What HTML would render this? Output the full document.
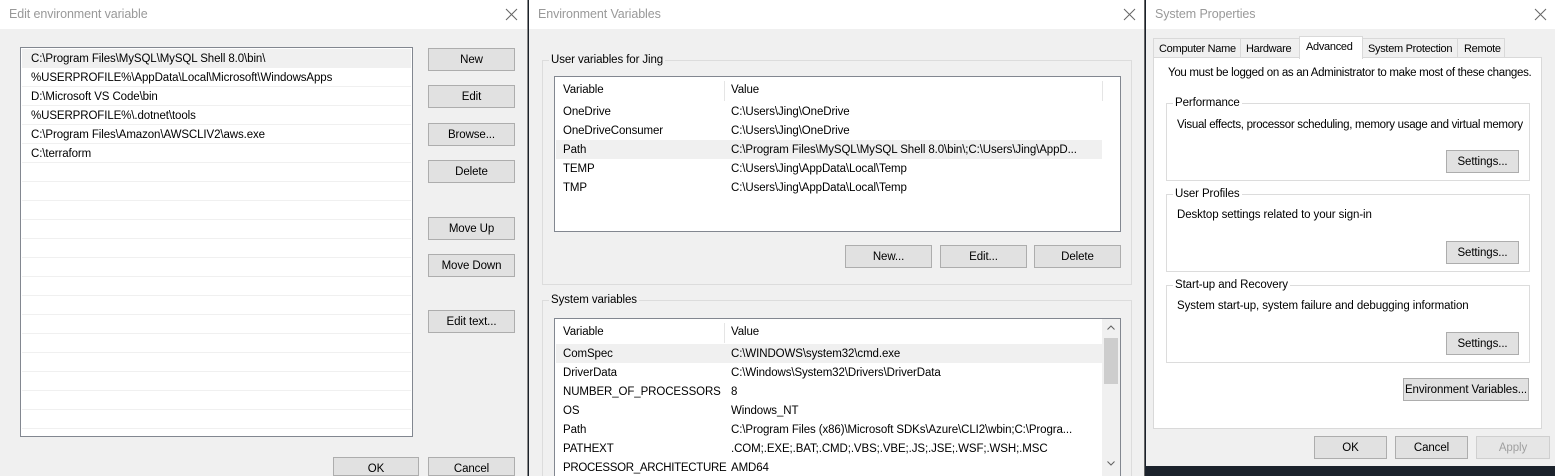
<!DOCTYPE html><html><head><style>
*{box-sizing:border-box;margin:0;padding:0;white-space:nowrap}
body{width:1555px;height:476px;overflow:hidden;position:relative;background:#1b222b;font-family:"Liberation Sans",sans-serif;font-size:11.5px;letter-spacing:-0.1px;color:#000}
.a{position:absolute}
.win{position:absolute;top:0;background:#f0f0f0;overflow:hidden}
.tb{position:absolute;left:0;top:0;right:0;height:29px;background:#fff;color:#999;font-size:12.5px;padding:7px 0 0 9px}
.x{position:absolute;top:8px;width:13px;height:13px}
.btn{position:absolute;height:23px;background:#e1e1e1;border:1px solid #adadad;text-align:center;line-height:22px}
.lst{position:absolute;background:#fff;border:1px solid #828790;overflow:hidden}
.row{position:absolute;left:1px;right:1px;height:19px;line-height:20px}
.sep{border-bottom:1px solid #f0f0f0}
.gb{position:absolute;border:1px solid #dcdcdc}
.gl{position:absolute;background:#f0f0f0;padding:0 2px;top:-7px;left:6px}
.gw{background:#fff}
.tab{font-size:11px;letter-spacing:-0.3px}
</style></head><body>
<!-- left -->
<div class="win" style="left:0;width:528px;height:476px;border-right:1px solid #888">
<div class="tb">Edit environment variable<svg class="x" style="left:505px" viewBox="0 0 13 13"><path d="M1 1L12 12M12 1L1 12" stroke="#666" stroke-width="1" fill="none"/></svg></div>
<div class="lst" style="left:20px;top:47px;width:393px;height:390px">
<div class="row" style="top:1px;background:#f0f0f0;padding-left:9px">C:\Program Files\MySQL\MySQL Shell 8.0\bin\</div>
<div class="row sep" style="top:20px;padding-left:9px">%USERPROFILE%\AppData\Local\Microsoft\WindowsApps</div>
<div class="row sep" style="top:39px;padding-left:9px">D:\Microsoft VS Code\bin</div>
<div class="row sep" style="top:58px;padding-left:9px">%USERPROFILE%\.dotnet\tools</div>
<div class="row sep" style="top:77px;padding-left:9px">C:\Program Files\Amazon\AWSCLIV2\aws.exe</div>
<div class="row sep" style="top:96px;padding-left:9px">C:\terraform</div>
<div class="row sep" style="top:115px"></div><div class="row sep" style="top:134px"></div><div class="row sep" style="top:153px"></div><div class="row sep" style="top:172px"></div><div class="row sep" style="top:191px"></div><div class="row sep" style="top:210px"></div><div class="row sep" style="top:229px"></div><div class="row sep" style="top:248px"></div><div class="row sep" style="top:267px"></div><div class="row sep" style="top:286px"></div><div class="row sep" style="top:305px"></div><div class="row sep" style="top:324px"></div><div class="row sep" style="top:343px"></div><div class="row sep" style="top:362px"></div>
</div>
<div class="btn" style="left:428px;top:48px;width:87px">New</div>
<div class="btn" style="left:428px;top:85px;width:87px">Edit</div>
<div class="btn" style="left:428px;top:123px;width:87px">Browse...</div>
<div class="btn" style="left:428px;top:160px;width:87px">Delete</div>
<div class="btn" style="left:428px;top:217px;width:87px">Move Up</div>
<div class="btn" style="left:428px;top:254px;width:87px">Move Down</div>
<div class="btn" style="left:428px;top:310px;width:87px">Edit text...</div>
<div class="btn" style="left:333px;top:457px;width:86px;height:19px">OK</div>
<div class="btn" style="left:428px;top:457px;width:87px;height:19px">Cancel</div>
</div>
<!-- middle -->
<div class="win" style="left:529px;width:616px;height:476px;border-right:1px solid #666">
<div class="tb">Environment Variables<svg class="x" style="left:594px" viewBox="0 0 13 13"><path d="M1 1L12 12M12 1L1 12" stroke="#666" stroke-width="1" fill="none"/></svg></div>
<div class="gb" style="left:13px;top:60px;width:590px;height:225px"><span class="gl">User variables for Jing</span></div>
<div class="lst" style="left:25px;top:76px;width:567px;height:156px">
<div class="row" style="top:1px;height:24px;line-height:25px;padding-left:7px">Variable<span class="a" style="left:168px;top:3px;height:20px;border-left:1px solid #e5e5e5"></span><span class="a" style="left:175px">Value</span><span class="a" style="left:546px;top:3px;height:20px;border-left:1px solid #e5e5e5"></span></div>
<div class="row" style="top:25px;padding-left:7px">OneDrive<span class="a" style="left:175px">C:\Users\Jing\OneDrive</span></div>
<div class="row" style="top:44px;padding-left:7px">OneDriveConsumer<span class="a" style="left:175px">C:\Users\Jing\OneDrive</span></div>
<div class="row" style="top:63px;padding-left:7px;background:#f0f0f0;right:18px">Path<span class="a" style="left:175px">C:\Program Files\MySQL\MySQL Shell 8.0\bin\;C:\Users\Jing\AppD...</span></div>
<div class="row" style="top:82px;padding-left:7px">TEMP<span class="a" style="left:175px">C:\Users\Jing\AppData\Local\Temp</span></div>
<div class="row" style="top:101px;padding-left:7px">TMP<span class="a" style="left:175px">C:\Users\Jing\AppData\Local\Temp</span></div>
</div>
<div class="btn" style="left:316px;top:245px;width:87px">New...</div>
<div class="btn" style="left:411px;top:245px;width:87px">Edit...</div>
<div class="btn" style="left:505px;top:245px;width:87px">Delete</div>
<div class="gb" style="left:13px;top:300px;width:590px;height:176px;border-bottom:none"><span class="gl">System variables</span></div>
<div class="lst" style="left:25px;top:318px;width:567px;height:158px;border-bottom:none">
<div class="row" style="top:1px;height:24px;line-height:25px;padding-left:7px">Variable<span class="a" style="left:168px;top:3px;height:20px;border-left:1px solid #e5e5e5"></span><span class="a" style="left:175px">Value</span></div>
<div class="row" style="top:25px;padding-left:7px;background:#f0f0f0;right:18px">ComSpec<span class="a" style="left:175px">C:\WINDOWS\system32\cmd.exe</span></div>
<div class="row" style="top:44px;padding-left:7px">DriverData<span class="a" style="left:175px">C:\Windows\System32\Drivers\DriverData</span></div>
<div class="row" style="top:63px;padding-left:7px">NUMBER_OF_PROCESSORS<span class="a" style="left:175px">8</span></div>
<div class="row" style="top:82px;padding-left:7px">OS<span class="a" style="left:175px">Windows_NT</span></div>
<div class="row" style="top:101px;padding-left:7px">Path<span class="a" style="left:175px">C:\Program Files (x86)\Microsoft SDKs\Azure\CLI2\wbin;C:\Progra...</span></div>
<div class="row" style="top:120px;padding-left:7px">PATHEXT<span class="a" style="left:175px">.COM;.EXE;.BAT;.CMD;.VBS;.VBE;.JS;.JSE;.WSF;.WSH;.MSC</span></div>
<div class="row" style="top:139px;padding-left:7px;letter-spacing:-0.3px">PROCESSOR_ARCHITECTURE<span class="a" style="left:175px;letter-spacing:-0.1px">AMD64</span></div>
<div class="a" style="left:547px;top:0;width:18px;height:158px;background:#f0f0f0"><div class="a" style="left:2px;top:19px;width:14px;height:46px;background:#cdcdcd"></div>
<svg class="a" style="left:5px;top:6px" width="8" height="5" viewBox="0 0 8 5"><path d="M0.5 4.5L4 1L7.5 4.5" stroke="#606060" fill="none"/></svg>
<svg class="a" style="left:5px;top:142px" width="8" height="5" viewBox="0 0 8 5"><path d="M0.5 0.5L4 4L7.5 0.5" stroke="#606060" fill="none"/></svg></div>
</div>
</div>
<!-- right -->
<div class="win" style="left:1146px;width:409px;height:466px">
<div class="tb">System Properties<svg class="x" style="left:388px" viewBox="0 0 13 13"><path d="M1 1L12 12M12 1L1 12" stroke="#666" stroke-width="1" fill="none"/></svg></div>
<div class="a" style="left:7px;top:57px;width:389px;height:372px;background:#fff;border:1px solid #d9d9d9"></div>
<div class="a tab" style="left:7px;top:38px;width:88px;height:20px;border:1px solid #d9d9d9;background:#f0f0f0;padding:4px 0 0 5px">Computer Name</div>
<div class="a tab" style="left:94px;top:38px;width:60px;height:20px;border:1px solid #d9d9d9;background:#f0f0f0;padding:4px 0 0 5px">Hardware</div>
<div class="a tab" style="left:153px;top:36px;width:64px;height:23px;border:1px solid #d9d9d9;border-bottom:none;background:#fff;padding:4px 0 0 6px">Advanced</div>
<div class="a tab" style="left:216px;top:38px;width:96px;height:20px;border:1px solid #d9d9d9;background:#f0f0f0;padding:4px 0 0 5px">System Protection</div>
<div class="a tab" style="left:311px;top:38px;width:48px;height:20px;border:1px solid #d9d9d9;background:#f0f0f0;padding:4px 0 0 6px">Remote</div>
<div class="a" style="left:22px;top:67px;letter-spacing:-0.3px">You must be logged on as an Administrator to make most of these changes.</div>
<div class="gb" style="left:20px;top:103px;width:364px;height:78px"><span class="gl gw">Performance</span><span class="a" style="left:10px;top:15px;letter-spacing:-0.3px">Visual effects, processor scheduling, memory usage and virtual memory</span></div>
<div class="btn" style="left:300px;top:150px;width:73px">Settings...</div>
<div class="gb" style="left:20px;top:194px;width:364px;height:78px"><span class="gl gw">User Profiles</span><span class="a" style="left:10px;top:14px">Desktop settings related to your sign-in</span></div>
<div class="btn" style="left:300px;top:241px;width:73px">Settings...</div>
<div class="gb" style="left:20px;top:285px;width:364px;height:78px"><span class="gl gw">Start-up and Recovery</span><span class="a" style="left:10px;top:14px">System start-up, system failure and debugging information</span></div>
<div class="btn" style="left:300px;top:332px;width:73px">Settings...</div>
<div class="btn" style="left:257px;top:378px;width:126px">Environment Variables...</div>
<div class="btn" style="left:168px;top:436px;width:73px">OK</div>
<div class="btn" style="left:249px;top:436px;width:73px">Cancel</div>
<div class="btn" style="left:330px;top:436px;width:74px;color:#a0a0a0;background:#e6e6e6;border-color:#cfcfcf">Apply</div>
</div>
</body></html>
